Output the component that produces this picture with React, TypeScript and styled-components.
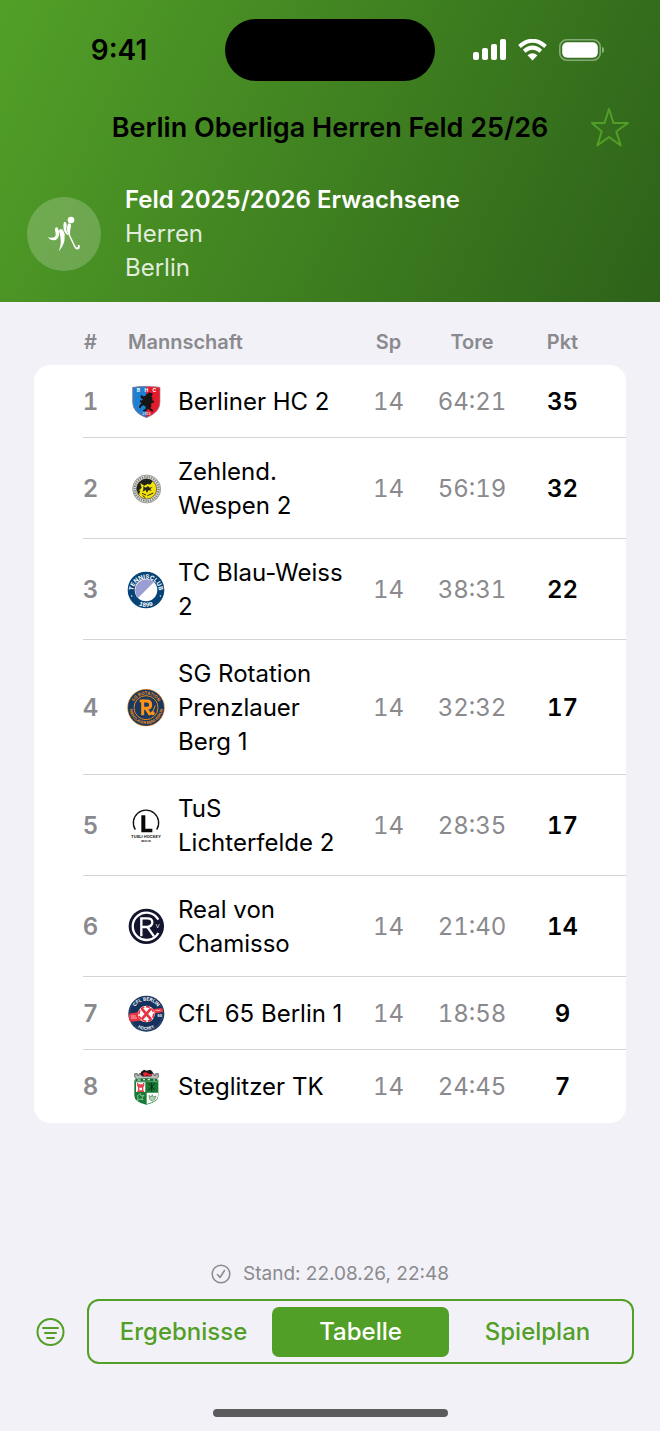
import React, { useState } from "react";
import styled, { createGlobalStyle } from "styled-components";

const GREEN = "#529f27";
const GREY = "#8a8a8e";

const GlobalStyle = createGlobalStyle`
  *, *::before, *::after { box-sizing: border-box; }
  body {
    margin: 0;
    background: #f2f1f7;
    color: #000;
    font-family: Inter, "Liberation Sans", sans-serif;
    font-size: 24px;
    line-height: 34px;
  }
  h1, h2, p { margin: 0; }
  svg { display: block; }
  button { font: inherit; border: 0; padding: 0; background: none; color: inherit; cursor: pointer; }
`;

const Page = styled.div`
  min-height: 100vh;
  display: flex;
  flex-direction: column;
`;

const Header = styled.header`
  background: linear-gradient(115deg, #52a028 0%, #2d6219 100%);
  padding: 19px 27px 17px;
`;

const StatusBar = styled.div`
  display: grid;
  grid-template-columns: 1fr 210px 1fr;
  align-items: center;
`;

const Clock = styled.time`
  font-size: 28px;
  font-weight: 600;
  padding-right: 14px;
  text-align: center;
`;

const Island = styled.div`
  height: 62px;
  border-radius: 31px;
  background: #000;
`;

const StatusIcons = styled.div`
  display: flex;
  align-items: center;
  gap: 12px;
  padding-left: 38px;
`;

const NavBar = styled.div`
  display: flex;
  align-items: center;
  justify-content: space-between;
  height: 74px;
  margin: 10px 0 18px;
`;

const NavButton = styled.button`
  display: flex;
  align-items: center;
  width: 42px;
  height: 44px;
  color: ${GREEN};
`;

const Title = styled.h1`
  font-size: 27px;
  font-weight: 600;
  white-space: nowrap;
`;

const League = styled.div`
  display: flex;
  align-items: center;
  gap: 24px;
`;

const LeagueBadge = styled.div`
  display: grid;
  place-items: center;
  width: 74px;
  height: 74px;
  border-radius: 50%;
  background: rgba(255, 255, 255, 0.2);
`;

const LeagueName = styled.h2`
  color: #fff;
  font-size: 24px;
  font-weight: 600;
`;

const LeagueDetail = styled.p`
  color: rgba(255, 255, 255, 0.85);
`;

const Main = styled.main`
  padding: 0 34px;
`;

const Standings = styled.table`
  width: 100%;
  table-layout: fixed;
  border-spacing: 0;
  font-variant-numeric: tabular-nums;
`;

const Column = styled.col<{ $width?: number }>`
  width: ${(p) => (p.$width ? `${p.$width}px` : "auto")};
`;

const HeadCell = styled.th<{ $kind?: "rank" | "team" | "points" }>`
  height: 63px;
  padding: 23px 0 6px;
  color: ${GREY};
  font-size: 20px;
  font-weight: 600;
  text-align: ${(p) => (p.$kind === "team" ? "left" : "center")};
  ${(p) => p.$kind === "rank" && "padding-left: 48px; padding-right: 27px;"}
  ${(p) => p.$kind === "team" && "padding-left: 2px;"}
  ${(p) => p.$kind === "points" && "padding-right: 20px;"}
`;

const Cell = styled.td`
  padding: 17px 0 16px;
  text-align: center;
  color: ${GREY};
  background: linear-gradient(#d4d4d8, #d4d4d8) 0 100% / 100% 1px no-repeat #fff;
`;

const RankCell = styled(Cell)`
  padding-left: 48px;
  padding-right: 27px;
  font-weight: 600;
  background-position: 49px 100%;
`;

const NameCell = styled(Cell)`
  color: #000;
  text-align: left;
  font-variant-numeric: normal;
`;

const PointsCell = styled(Cell)`
  padding-right: 20px;
  color: #000;
  font-weight: 600;
`;

const Body = styled.tbody`
  tr:first-child td:first-child { border-top-left-radius: 16px; }
  tr:first-child td:last-child { border-top-right-radius: 16px; }
  tr:last-child td { background-image: none; }
  tr:last-child td:first-child { border-bottom-left-radius: 16px; }
  tr:last-child td:last-child { border-bottom-right-radius: 16px; }
`;

const Footer = styled.footer`
  margin-top: auto;
  padding-bottom: 14px;
`;

const Updated = styled.p`
  display: flex;
  align-items: center;
  justify-content: center;
  gap: 12px;
  color: ${GREY};
  font-size: 19px;
  line-height: 20px;
`;

const Controls = styled.div`
  display: flex;
  align-items: center;
  gap: 22px;
  margin: 15px 0 45px;
  padding: 0 26px 0 36px;
`;

const FilterButton = styled.button`
  color: ${GREEN};
`;

const Segments = styled.nav`
  flex: 1;
  display: grid;
  grid-template-columns: repeat(3, 1fr);
  height: 65px;
  padding: 6px 6px 5px;
  border: 2px solid ${GREEN};
  border-radius: 12px;
`;

const Segment = styled.button<{ $active: boolean }>`
  border-radius: 7px;
  font-weight: 500;
  color: ${(p) => (p.$active ? "#fff" : GREEN)};
  background: ${(p) => (p.$active ? GREEN : "transparent")};
`;

const HomeIndicator = styled.div`
  width: 235px;
  height: 8px;
  margin: 0 auto;
  border-radius: 4px;
  background: #5b5b5d;
`;

const Crest = ({ label, children }: { label: string; children: React.ReactNode }) => (
  <svg width="40" height="40" viewBox="0 0 120 120" role="img" aria-label={label} fontFamily="Inter, sans-serif" fontWeight="700" textAnchor="middle">
    {children}
  </svg>
);

const BhcCrest = () => (
  <Crest label="Berliner HC">
    <path d="M20 16Q61 10 102 16V60Q102 92 61 107Q20 92 20 60Z" fill="#e31b2d" />
    <path d="M20 16Q40 13 61 13V107Q20 92 20 60Z" fill="#1f7fd3" />
    <path d="M20 16Q61 10 102 16V60Q102 92 61 107Q20 92 20 60Z" fill="none" stroke="#9c8797" strokeWidth="2" />
    <g fill="#fff" fontSize="15">
      <text x="37" y="29">B</text>
      <text x="61" y="29">H</text>
      <text x="85" y="29">C</text>
    </g>
    <path d="M64 36l6-5 5 3 3-2 2 6-4 5 4 7-2 5 5 1 2 6-6 0-4 3 1 8-3 5 8 6-1 5-8-4-6-5-5 6-8 3-2-5 8-4 0-6-6-4-6 2-4 7-4-2 2-8 6-5-5-5 0-5 6 2 3-4-6-3-2-7 4-3 4 4 7-1 4-7z" fill="#151515" />
    <text x="61" y="98" fontSize="10" fill="#dfc9d4">1905</text>
  </Crest>
);

const WespenCrest = () => (
  <Crest label="Zehlendorfer Wespen">
    <circle cx="62" cy="60" r="42" fill="#dededa" stroke="#777" strokeWidth="2" />
    <circle cx="62" cy="60" r="36" fill="none" stroke="#85857f" strokeWidth="7" strokeDasharray="4 3" />
    <circle cx="62" cy="60" r="30" fill="#f4e30b" stroke="#333" strokeWidth="2" />
    <path d="M32 63A30 30 0 0 1 80 36L74 46 58 48 44 60 39 78Z" fill="#20221c" />
    <path d="M43 42l14 10 8-8 6 6 14-6-5 9 8 4-12 3 4 10-11-6-3 12-7-11-9 8 1-10-14 2 10-8z" fill="#f4e30b" />
    <path d="M52 51l7 5 7-5 5 5 9-2-7 6 4 6-9-3-5 9-4-9-9 5 2-7z" fill="#292a1d" />
    <path d="M48 73l12 5M64 80l18-8M50 80l8 6" stroke="#26271c" strokeWidth="3" />
  </Crest>
);

const BlauWeissCrest = () => (
  <Crest label="TC Blau-Weiss">
    <circle cx="60" cy="60" r="55" fill="#064477" />
    <circle cx="60" cy="60" r="34" fill="#fff" />
    <path d="M36 84A34 34 0 0 1 84 36Z" fill="#999fd3" />
    <path id="bw-top" d="M22 74A39 39 0 1 1 98 74" fill="none" />
    <path id="bw-bottom" d="M16 84A50 50 0 0 0 104 84" fill="none" />
    <text fontSize="18" fill="#fff"><textPath href="#bw-top" startOffset="50%">TENNISCLUB</textPath></text>
    <text fontSize="17" fill="#fff"><textPath href="#bw-bottom" startOffset="50%">1899</textPath></text>
    <circle cx="17" cy="78" r="2" fill="#fff" />
    <circle cx="103" cy="78" r="2" fill="#fff" />
  </Crest>
);

const RotationCrest = () => (
  <Crest label="SG Rotation Prenzlauer Berg">
    <circle cx="60" cy="59" r="56" fill="#d87a18" />
    <circle cx="60" cy="59" r="54" fill="#183961" />
    <circle cx="60" cy="59" r="36" fill="none" stroke="#ef8612" strokeWidth="3" />
    <path id="ro-top" d="M22 45A41 41 0 0 1 98 45" fill="none" />
    <path id="ro-bottom" d="M10 58A50 50 0 0 0 110 58" fill="none" />
    <text fontSize="13" fill="#f18b16"><textPath href="#ro-top" startOffset="50%">SG ROTATION</textPath></text>
    <text fontSize="11" fill="#f18b16"><textPath href="#ro-bottom" startOffset="50%">PRENZLAUER BERG BERLIN</textPath></text>
    <path d="M50 82V39H62Q74 39 74 50T62 61H50M60 61L73 81" fill="none" stroke="#ff9418" strokeWidth="9" />
    <path d="M41 39H52" stroke="#ff9418" strokeWidth="8" />
    <path d="M78 75L88 53" stroke="#ff9418" strokeWidth="3" />
    <circle cx="80" cy="76" r="6" fill="#ff9418" />
  </Crest>
);

const TusCrest = () => (
  <Crest label="TuS Lichterfelde">
    <path d="M28 71A38 38 0 1 1 92 71" fill="none" stroke="#111" strokeWidth="4" />
    <path d="M46 28H58V68H79V79H46Z" fill="#080808" />
    <text x="60" y="96" fontSize="12" fill="#222">TUSLI HOCKEY</text>
    <text x="60" y="107" fontSize="8" fill="#222">BERLIN</text>
  </Crest>
);

const RealCrest = () => (
  <Crest label="Real von Chamisso">
    <circle cx="61" cy="58" r="53" fill="#13152e" />
    <path d="M97 38A41 41 0 1 0 97 78" fill="none" stroke="#fff" strokeWidth="7" />
    <path d="M46 88V34H64Q79 34 79 46T64 60H47M64 60L84 88" fill="none" stroke="#fff" strokeWidth="7" />
    <path d="M90 51L95 63 100 51" fill="none" stroke="#fff" strokeWidth="2" />
  </Crest>
);

const CflCrest = () => (
  <Crest label="CfL 65 Berlin">
    <circle cx="61" cy="59" r="54" fill="#15315d" />
    <circle cx="61" cy="59" r="50" fill="none" stroke="#6f86a8" strokeWidth="1" />
    <path d="M9 65Q10 55 20 57Q36 57 42 48Q50 39 61 39Q74 39 83 45L106 42Q115 47 110 54L85 59 76 78Q61 88 45 80L13 83Q7 76 9 65Z" fill="#e83440" />
    <circle cx="61" cy="60" r="25" fill="#fff" />
    <circle cx="61" cy="60" r="22" fill="none" stroke="#e83440" strokeWidth="5" strokeDasharray="12 5" />
    <path d="M47 44L75 76M75 44L47 76" stroke="#e83440" strokeWidth="8" />
    <path d="M14 66H29M15 72H33M88 49H104" stroke="#fff" strokeWidth="2" />
    <path id="cfl-top" d="M22 51A40 40 0 0 1 100 51" fill="none" />
    <path id="cfl-bottom" d="M17 77A47 47 0 0 0 105 77" fill="none" />
    <text fontSize="14" fill="#fff"><textPath href="#cfl-top" startOffset="50%">CFL BERLIN</textPath></text>
    <text fontSize="12" fill="#fff"><textPath href="#cfl-bottom" startOffset="50%">HOCKEY</textPath></text>
    <text x="101" y="69" fontSize="10" fill="#fff">65</text>
  </Crest>
);

const SteglitzCrest = () => (
  <Crest label="Steglitzer TK">
    <path d="M25 38H97V86Q97 105 61 113Q25 105 25 86Z" fill="#177a35" />
    <path d="M30 46H58V75H30ZM62 77H96V88Q94 103 62 111Z" fill="#fff" />
    <path d="M26 29V20H34V25H39V20H48V28H75V20H84V25H89V20H97V30L91 36H31Z" fill="#b8bcba" stroke="#333" strokeWidth="2" />
    <path d="M45 15l9-7 8 3 11-3 8 8-5 11H50l-7-4z" fill="#181818" />
    <path d="M50 18l9-3 9 5 11 2-3 6-14-3-7 4z" fill="#e92430" />
    <path d="M27 35Q61 31 95 35L93 44Q61 40 29 44Z" fill="#116b2c" stroke="#fff" strokeWidth="1" />
    <path d="M34 39H44M51 38H57M65 38H72M82 39H87" stroke="#fff" strokeWidth="3" />
    <path d="M35 48V54H53V48M38 60H50V72H38ZM34 57H54M34 73H54" stroke="#e5404d" strokeWidth="4" fill="none" />
    <path d="M68 48L86 69M87 48L68 69M77 46V73" stroke="#0b3419" strokeWidth="3" />
    <path d="M34 86l9-6 2 7 9-2-6 8 3 6-9-3-8 5 2-8z" fill="none" stroke="#b9dcb9" strokeWidth="2" />
    <path d="M69 85l6 5 4-7 3 7 8-3-4 10-7 5-8-5z" fill="#b9ceb9" stroke="#3b8850" strokeWidth="2" />
  </Crest>
);

const teams = [
  { name: "Berliner HC 2", goals: "64:21", points: 35, Logo: BhcCrest },
  { name: "Zehlend. Wespen 2", goals: "56:19", points: 32, Logo: WespenCrest },
  { name: "TC Blau-Weiss 2", goals: "38:31", points: 22, Logo: BlauWeissCrest },
  { name: "SG Rotation Prenzlauer Berg 1", goals: "32:32", points: 17, Logo: RotationCrest },
  { name: "TuS Lichterfelde 2", goals: "28:35", points: 17, Logo: TusCrest },
  { name: "Real von Chamisso", goals: "21:40", points: 14, Logo: RealCrest },
  { name: "CfL 65 Berlin 1", goals: "18:58", points: 9, Logo: CflCrest },
  { name: "Steglitzer TK", goals: "24:45", points: 7, Logo: SteglitzCrest },
];

const views = ["Ergebnisse", "Tabelle", "Spielplan"];

export default function App() {
  const [view, setView] = useState("Tabelle");
  return (
    <Page>
      <GlobalStyle />
      <Header>
        <StatusBar>
          <Clock>9:41</Clock>
          <Island />
          <StatusIcons>
            <svg width="33" height="22" viewBox="0 0 33 22" fill="#fff" aria-label="Signal">
              <rect x="0" y="13" width="6" height="8" rx="2" />
              <rect x="9" y="9" width="6" height="12" rx="2" />
              <rect x="18" y="5" width="6" height="16" rx="2" />
              <rect x="27" y="0" width="6" height="21" rx="2" />
            </svg>
            <svg width="29" height="22" viewBox="0 0 29 22" aria-label="WLAN">
              <path d="M1.5 7.5Q14.5 -4 27.5 7.5M6.2 12.2Q14.5 5 22.8 12.2" fill="none" stroke="#fff" strokeWidth="4" />
              <path d="M9.5 16.3Q14.5 12 19.5 16.3L14.5 21.5Z" fill="#fff" />
            </svg>
            <svg width="46" height="22" viewBox="0 0 46 22" aria-label="Akku">
              <rect x="0.8" y="0.8" width="40.4" height="20.4" rx="7" fill="none" stroke="#fff" strokeOpacity=".4" strokeWidth="1.6" />
              <rect x="3.2" y="3.2" width="35.6" height="15.6" rx="5" fill="#fff" />
              <path d="M43 8Q45 8 45 11T43 14Z" fill="#fff" fillOpacity=".45" />
            </svg>
          </StatusIcons>
        </StatusBar>
        <NavBar>
          <NavButton aria-label="Zurück">
            <svg width="12" height="32" viewBox="0 0 12 32" fill="none" stroke={GREEN} strokeOpacity=".5" strokeWidth="2">
              <path d="M7 2L-6 16 7 30" />
            </svg>
          </NavButton>
          <Title>Berlin Oberliga Herren Feld 25/26</Title>
          <NavButton aria-label="Favorit">
            <svg width="42" height="42" viewBox="1 0 42 42" fill="none" stroke="currentColor" strokeWidth="2" strokeLinejoin="round">
              <path d="M19 2L23.5 16H38L26.3 24.5 30.7 38.5 19 30 7.3 38.5 11.7 24.5 2 16H14.5Z" />
            </svg>
          </NavButton>
        </NavBar>
        <League>
          <LeagueBadge>
            <svg width="34" height="36" viewBox="0 0 102 108" fill="#fff" aria-label="Hockey">
              <circle cx="72" cy="12" r="10" />
              <path d="M66 22Q73 23 72 31Q68 43 69 57L84 88Q88 97 92 94Q95 91 91 88L97 86Q101 96 94 100Q86 103 81 92L65 58Q59 50 60 36Q61 24 66 22Z" />
              <path d="M51 18Q58 16 59 25L58 42 64 58Q53 54 50 40Q47 28 51 18Z" />
              <path d="M3 64Q16 67 24 62Q28 58 24 43Q24 31 32 35Q37 43 36 56Q34 70 22 73Q9 74 3 64Z" />
              <path d="M36 44Q39 35 46 43Q64 74 35 106Q47 78 36 44Z" />
              <path d="M44 38Q52 44 54 62Q48 58 44 38Z" />
            </svg>
          </LeagueBadge>
          <div>
            <LeagueName>Feld 2025/2026 Erwachsene</LeagueName>
            <LeagueDetail>Herren</LeagueDetail>
            <LeagueDetail>Berlin</LeagueDetail>
          </div>
        </League>
      </Header>

      <Main>
        <Standings>
          <colgroup>
            <Column $width={92} />
            <Column $width={52} />
            <Column />
            <Column $width={73} />
            <Column $width={94} />
            <Column $width={107} />
          </colgroup>
          <thead>
            <tr>
              <HeadCell scope="col" $kind="rank">#</HeadCell>
              <HeadCell scope="col" $kind="team" colSpan={2}>Mannschaft</HeadCell>
              <HeadCell scope="col">Sp</HeadCell>
              <HeadCell scope="col">Tore</HeadCell>
              <HeadCell scope="col" $kind="points">Pkt</HeadCell>
            </tr>
          </thead>
          <Body>
            {teams.map(({ name, goals, points, Logo }, index) => (
              <tr key={name}>
                <RankCell>{index + 1}</RankCell>
                <Cell><Logo /></Cell>
                <NameCell>{name}</NameCell>
                <Cell>14</Cell>
                <Cell>{goals}</Cell>
                <PointsCell>{points}</PointsCell>
              </tr>
            ))}
          </Body>
        </Standings>
      </Main>

      <Footer>
        <Updated>
          <svg width="20" height="20" viewBox="0 0 20 20" fill="none" stroke="currentColor" strokeWidth="1.5" strokeLinecap="round" strokeLinejoin="round" aria-hidden="true">
            <circle cx="10" cy="10" r="8.8" />
            <path d="M6.5 10.5L9 13.5 13.5 6.5" />
          </svg>
          Stand: 22.08.26, 22:48
        </Updated>
        <Controls>
          <FilterButton aria-label="Filter">
            <svg width="29" height="30" viewBox="0 0 29 30" fill="none" stroke="currentColor" strokeWidth="2" strokeLinecap="round">
              <circle cx="14.5" cy="15" r="13" />
              <path d="M7 11H22M9 16H20M11 21H18" />
            </svg>
          </FilterButton>
          <Segments>
            {views.map((label) => (
              <Segment key={label} $active={label === view} aria-pressed={label === view} onClick={() => setView(label)}>
                {label}
              </Segment>
            ))}
          </Segments>
        </Controls>
        <HomeIndicator />
      </Footer>
    </Page>
  );
}
